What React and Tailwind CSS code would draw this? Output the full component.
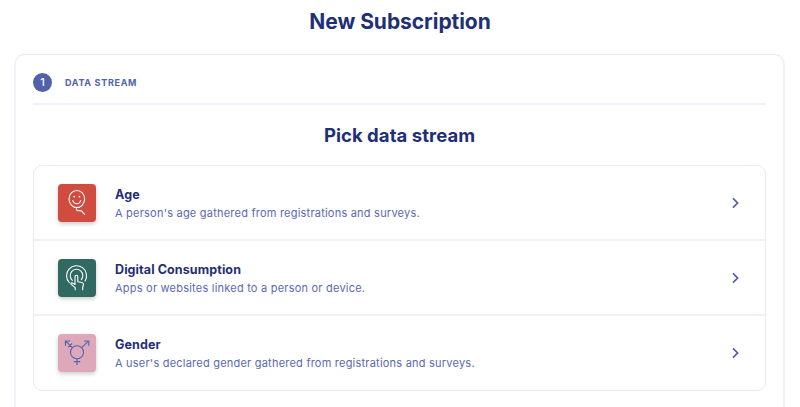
import clsx from "clsx";

const AgeIcon = () => (
  <svg viewBox="0 0 38 38" className="w-full h-full" fill="none" stroke="currentColor" strokeWidth="1.1" strokeLinecap="round" strokeLinejoin="round">
    <ellipse cx="18.800" cy="15" rx="7.800" ry="8.500" />
    <path d="M14.800 16.600c.8 2.200 2.200 3.100 4 3.100s3.200-.9 4-3.100" />
    <circle cx="16.200" cy="12.600" r=".4" fill="currentColor" />
    <circle cx="21.400" cy="12.600" r=".4" fill="currentColor" />
    <path d="M18.800 23.700c-1 1.600-.4 3 1.400 3 1.600 0 3.200-.4 4 .8.600 1 .9 2 2.400 2.800" />
  </svg>
);

const TouchIcon = () => (
  <svg viewBox="0 0 38 38" className="w-full h-full" fill="none" stroke="currentColor" strokeWidth="1.1" strokeLinecap="round" strokeLinejoin="round">
    <path d="M11.300 23.600A10 10 0 1 1 27 22" />
    <path d="M14.300 21.300A6.300 6.300 0 1 1 23.300 20.700" />
    <path d="M17.200 30.800v-2.200l-4-3.200c-.9-.8.200-2 1.200-1.400l2.600 1.500v-7.800c0-1.900 2.800-1.900 2.800 0v5l4.100.8c1.200.3 1.600 1 1.500 2.100l-.7 3v2.200" />
  </svg>
);

const GenderIcon = () => (
  <svg viewBox="0 0 38 38" className="w-full h-full" fill="none" stroke="currentColor" strokeWidth="1.100">
    <circle cx="19" cy="18.200" r="6.500" />
    <path d="M19 24.700V31M15.700 27.600h6.600" />
    <path d="M23.700 13.600 30.500 7.200M26 7h4.800v4.800" />
    <path d="M14.300 13.600 7.700 7.200M12.200 7H7.400v4.800M10.200 13.300l3.800-3.900" />
  </svg>
);

const streams = [
  {
    id: "age",
    name: "Age",
    description: "A person's age gathered from registrations and surveys.",
    icon: AgeIcon,
    tile: "bg-[#cf4c3f] text-white",
  },
  {
    id: "digital",
    name: "Digital Consumption",
    description: "Apps or websites linked to a person or device.",
    icon: TouchIcon,
    tile: "bg-[#30695f] text-white",
  },
  {
    id: "gender",
    name: "Gender",
    description: "A user's declared gender gathered from registrations and surveys.",
    icon: GenderIcon,
    tile: "bg-[#dfa8ba] text-[#5164ae]",
  },
];

const StreamRow = ({ stream }) => {
  const Icon = stream.icon;

  return (
    <li className="flex items-center h-[75px] pt-px pl-6 pr-[25px] last:h-[74px] last:pb-px">
      <div className={clsx("w-[38px] h-[38px] rounded shrink-0 shadow-[0_2px_4px_rgba(0,0,0,0.2)]", stream.tile)}>
        <Icon />
      </div>
      <div className="ml-[19px] flex-1 pt-px">
        <h3 className="text-[12.5px] leading-[18px] font-bold tracking-[0.1px] text-[#1f2f78]">
          {stream.name}
        </h3>
        <p className="text-[11px] leading-[18px] tracking-[0.22px] text-[#5a69b2]">
          {stream.description}
        </p>
      </div>
      <svg className="w-[10px] h-3 text-[#4f60aa]" viewBox="0 0 10 12" fill="none" stroke="currentColor" strokeWidth="1.700">
        <path d="M3 1.400 7.600 6 3 10.600" />
      </svg>
    </li>
  );
};

export default function App() {
  return (
    <div className="h-[407px] overflow-hidden bg-white font-['Inter',sans-serif]">
      <h1 className="h-[54px] pt-2 text-center text-[21px] leading-[28px] font-bold tracking-[-0.05px] text-[#1f2f78]">
        New Subscription
      </h1>

      <div className="ml-[14px] mr-[15px] h-[400px] px-[17px] border-2 border-t border-[#eef1fd] border-t-[#e3e8fb] rounded-[10px]">
        {/* Step header */}
        <div className="flex items-center h-[50px] pt-[7px] border-b-2 border-[#eef1fd]">
          <span className="flex items-center justify-center w-[19px] h-[19px] rounded-full bg-[#5062aa] text-white text-[11px] font-medium">
            1
          </span>
          <span className="ml-[13px] text-[9px] font-bold tracking-[0.7px] text-[#5062aa]">
            DATA STREAM
          </span>
        </div>

        <h2 className="h-[60px] pt-[17px] text-center text-[18.5px] leading-[26px] font-bold tracking-[0.05px] text-[#1f2f78]">
          Pick data stream
        </h2>

        <ul className="border border-[#e6eafc] rounded-[9px] divide-y-2 divide-[#eef1fd]">
          {streams.map((stream) => (
            <StreamRow key={stream.id} stream={stream} />
          ))}
        </ul>
      </div>
    </div>
  );
}
